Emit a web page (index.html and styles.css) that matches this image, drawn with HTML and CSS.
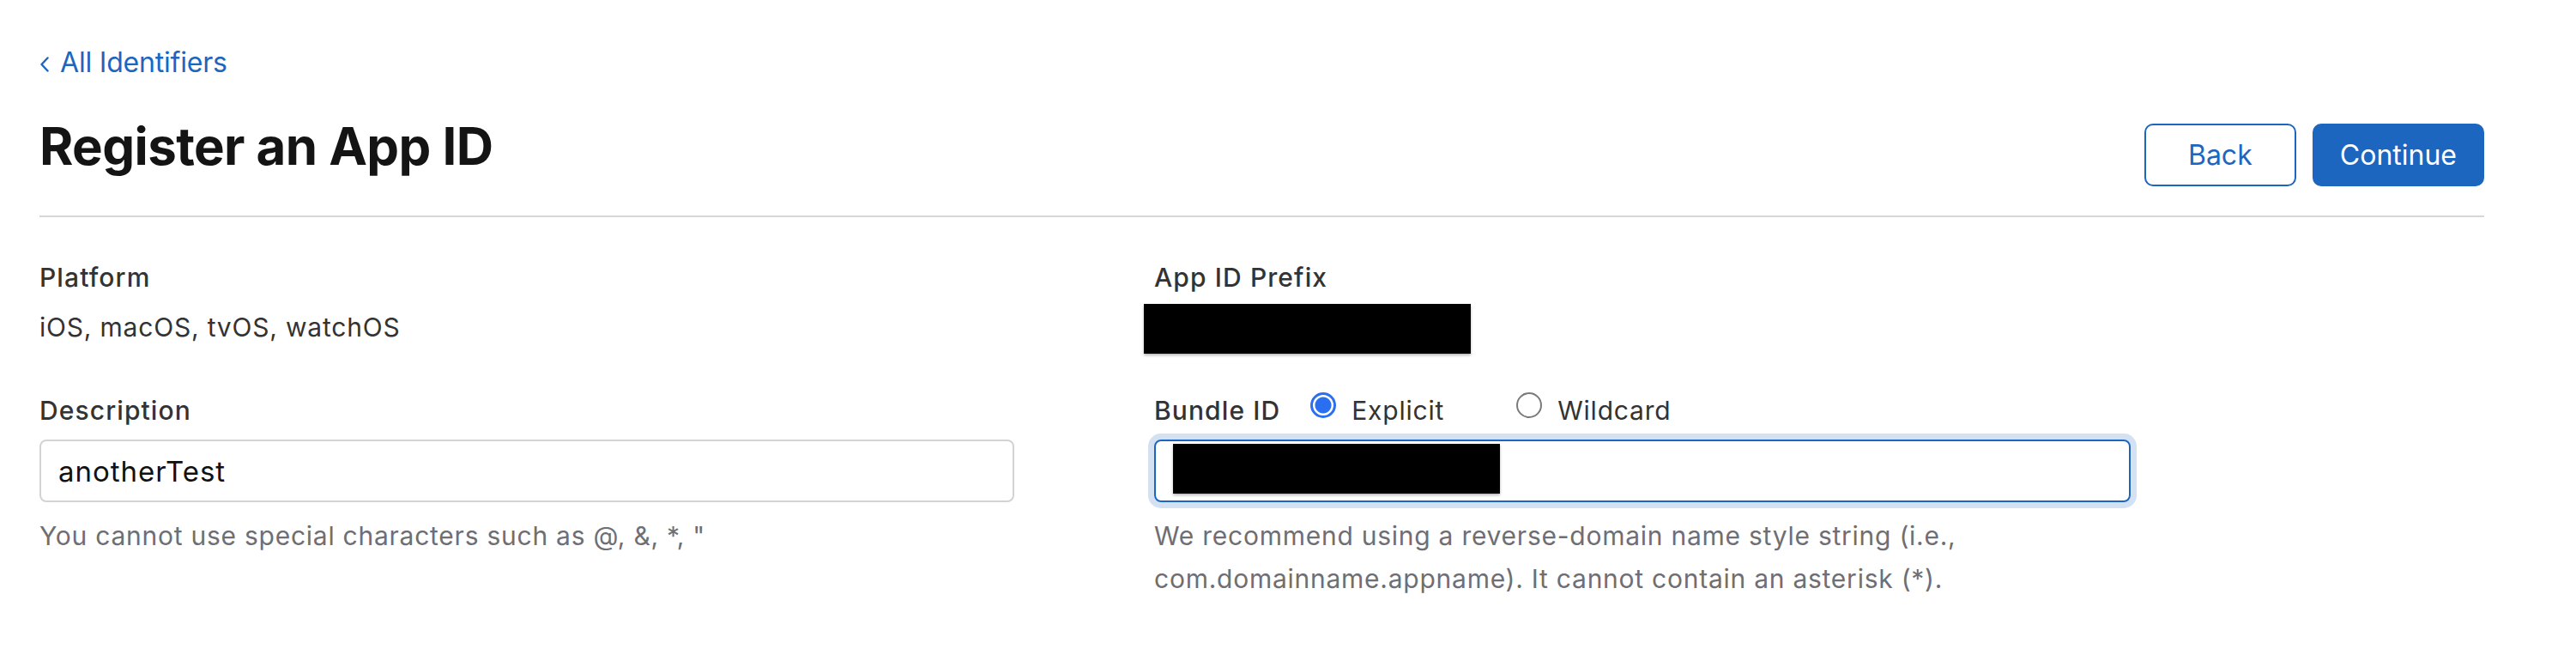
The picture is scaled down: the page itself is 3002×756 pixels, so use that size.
FILE: index.html
```html
<!DOCTYPE html>
<html lang="en">
<head>
<meta charset="utf-8">
<title>Register an App ID</title>
<link rel="stylesheet" href="styles.css">
</head>
<body>
<div class="page">
  <a class="back-link" href="#">
    <svg class="chev" width="12" height="18" viewBox="0 0 12 18" aria-hidden="true"><polyline points="9.5,1.5 2.5,9 9.5,16.5" fill="none" stroke="currentColor" stroke-width="2.4" stroke-linecap="round" stroke-linejoin="round"/></svg>
    <span>All Identifiers</span>
  </a>
  <div class="page-head">
    <h1 class="title">Register an App ID</h1>
    <div class="actions">
      <button class="btn btn-outline" type="button">Back</button>
      <button class="btn btn-primary" type="button">Continue</button>
    </div>
  </div>
  <div class="form-grid">
    <div class="field">
      <div class="label">Platform</div>
      <div class="value">iOS, macOS, tvOS, watchOS</div>
    </div>
    <div class="field">
      <div class="label">App ID Prefix</div>
      <div class="redact redact-prefix"></div>
    </div>
    <div class="field">
      <div class="label">Description</div>
      <div class="input input-desc">anotherTest</div>
      <p class="help">You cannot use special characters such as @, &amp;, *, "</p>
    </div>
    <div class="field">
      <div class="label-row">
        <span class="label">Bundle ID</span>
        <label class="choice choice-first"><span class="radio radio-on"></span><span class="choice-text">Explicit</span></label>
        <label class="choice"><span class="radio"></span><span class="choice-text">Wildcard</span></label>
      </div>
      <div class="input input-focus"><span class="redact redact-bundle"></span></div>
      <p class="help">We recommend using a reverse-domain name style string (i.e., com.domainname.appname). It cannot contain an asterisk (*).</p>
    </div>
  </div>
</div>
</body>
</html>
```
FILE: styles.css
```css
* { box-sizing: border-box; }
html, body { margin: 0; padding: 0; background: #ffffff; }
body {
  font-family: Inter, "Liberation Sans", Arial, sans-serif;
  color: #333333;
}
.page {
  width: 2895px;
  padding: 53px 0 0 46px;
}
.back-link {
  display: flex;
  align-items: center;
  gap: 12px;
  height: 40px;
  font-size: 32px;
  line-height: 40px;
  color: #1c66c0;
  text-decoration: none;
  letter-spacing: -0.2px;
}
.chev { display: block; margin-top: 3px; }
.page-head {
  display: flex;
  justify-content: space-between;
  align-items: flex-start;
  margin-top: 41px;
  padding-bottom: 34px;
  border-bottom: 2px solid #d6d6d6;
}
.title {
  margin: 0;
  font-size: 60px;
  line-height: 72px;
  font-weight: 700;
  color: #141414;
  letter-spacing: -0.6px;
}
.actions {
  display: flex;
  gap: 19px;
  margin-top: 10px;
}
.btn {
  height: 73px;
  min-width: 177px;
  padding: 0 30px;
  border-radius: 10px;
  border: 2px solid #1c66c0;
  font-family: inherit;
  font-size: 32px;
  font-weight: 400;
  cursor: pointer;
}
.btn-outline { background: #ffffff; color: #1c66c0; }
.btn-primary { background: #1c66c0; color: #ffffff; }
.form-grid {
  display: grid;
  grid-template-columns: 1299px 1138px;
  row-gap: 46px;
  margin-top: 50px;
}
.field { display: flex; flex-direction: column; }
.label {
  font-size: 30px;
  line-height: 40px;
  font-weight: 500;
  color: #333333;
  letter-spacing: 1.1px;
}
.value {
  margin-top: 18px;
  font-size: 30px;
  line-height: 40px;
  color: #333333;
  letter-spacing: 0.8px;
}
.redact {
  display: block;
  background: #000000;
  box-shadow: 0 2px 3px rgba(0, 0, 0, 0.28);
}
.redact-prefix {
  margin: 11px 0 0 -12px;
  width: 381px;
  height: 58px;
}
.label-row {
  display: flex;
  align-items: flex-start;
  height: 40px;
}
.choice {
  display: flex;
  align-items: flex-start;
  font-size: 30px;
  line-height: 40px;
  color: #333333;
  letter-spacing: 0.8px;
}
.choice-first { margin-left: 35px; margin-right: 84px; }
.radio {
  width: 30px;
  height: 30px;
  margin-top: -1px;
  border-radius: 50%;
  border: 2px solid #7a7a7a;
  background: #ffffff;
  flex: none;
}
.radio-on {
  border: 3px solid #2a6ff0;
  background: radial-gradient(circle, #2a6ff0 0 9px, #ffffff 10px);
}
.choice-text { margin-left: 18px; }
.input {
  margin-top: 14px;
  height: 73px;
  border: 2px solid #d3d3d3;
  border-radius: 8px;
  padding: 0 20px;
  display: flex;
  align-items: center;
  font-size: 33px;
  color: #111111;
  letter-spacing: 1px;
}
.input-desc { width: 1136px; }
.input-focus {
  width: 1138px;
  border-color: #1c66c0;
  box-shadow: 0 0 0 7px #d3e1f3;
  align-items: flex-start;
  padding-top: 3px;
}
.redact-bundle {
  width: 381px;
  height: 58px;
}
.help {
  margin: 14px 0 0;
  font-size: 30px;
  line-height: 50px;
  color: #6e6e73;
  letter-spacing: 0.75px;
}
```
